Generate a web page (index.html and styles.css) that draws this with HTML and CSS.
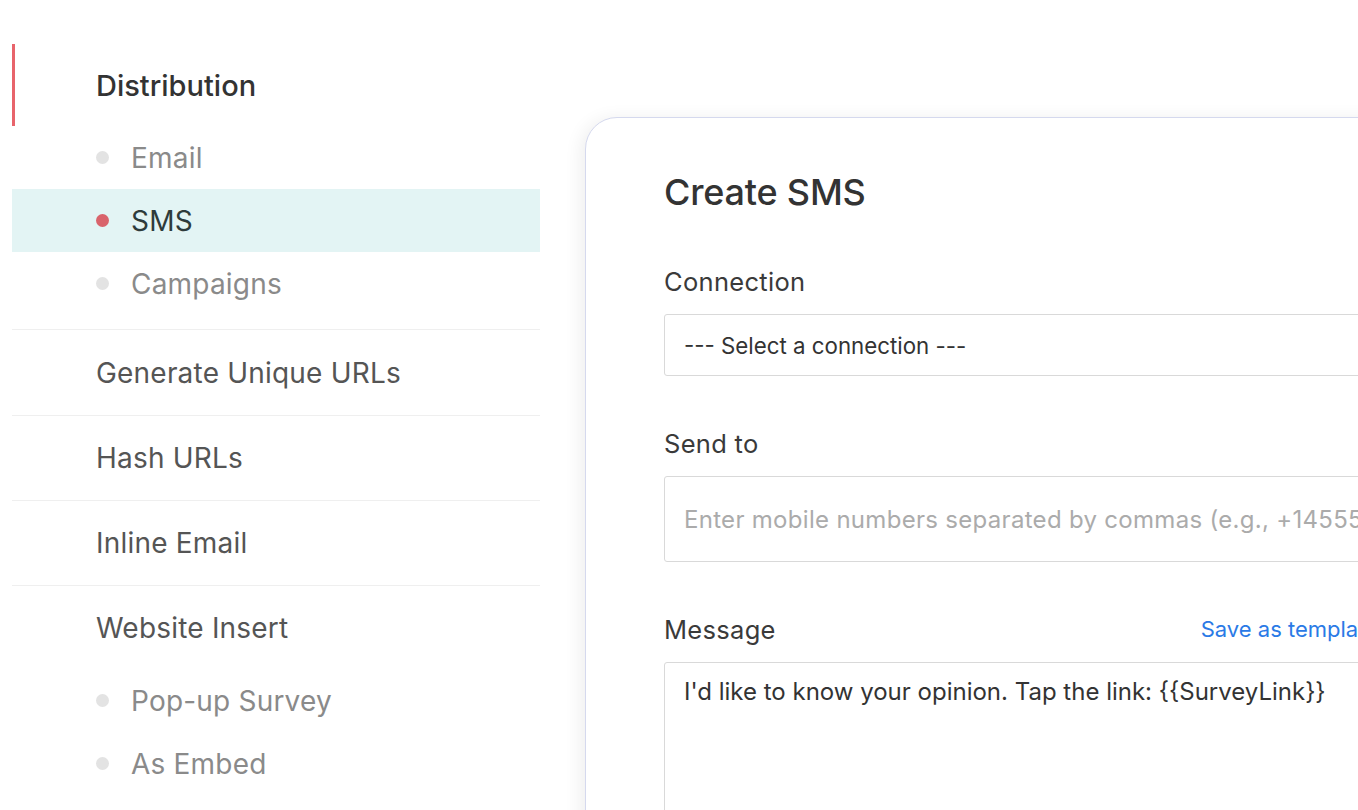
FILE: index.html
```html
<!DOCTYPE html>
<html lang="en">
<head>
<meta charset="utf-8">
<title>Create SMS</title>
<link rel="stylesheet" href="styles.css">
</head>
<body>
<div class="page">
  <nav class="sidebar">
    <div class="section-head active">Distribution</div>
    <ul class="sub">
      <li class="sub-item"><span class="dot"></span>Email</li>
      <li class="sub-item selected"><span class="dot"></span>SMS</li>
      <li class="sub-item"><span class="dot"></span>Campaigns</li>
    </ul>
    <div class="nav-item bordered first">Generate Unique URLs</div>
    <div class="nav-item bordered">Hash URLs</div>
    <div class="nav-item bordered">Inline Email</div>
    <div class="nav-item bordered short">Website Insert</div>
    <ul class="sub">
      <li class="sub-item"><span class="dot"></span>Pop-up Survey</li>
      <li class="sub-item"><span class="dot"></span>As Embed</li>
    </ul>
  </nav>
  <main class="card">
    <h1 class="title">Create SMS</h1>
    <div class="field">
      <div class="label-row"><span class="label">Connection</span></div>
      <div class="select">--- Select a connection ---</div>
    </div>
    <div class="field">
      <div class="label-row"><span class="label">Send to</span></div>
      <div class="input placeholder">Enter mobile numbers separated by commas (e.g., +14555550123, +14555550124)</div>
    </div>
    <div class="field">
      <div class="label-row"><span class="label">Message</span><a class="link">Save as template</a></div>
      <div class="textarea">I'd like to know your opinion. Tap the link: {{SurveyLink}}</div>
    </div>
  </main>
</div>
</body>
</html>
```
FILE: styles.css
```css
html, body {
  margin: 0;
  padding: 0;
  background: #ffffff;
  overflow: hidden;
}
body {
  font-family: "Inter", "Noto Sans", "Liberation Sans", sans-serif;
  color: #333;
  width: 1358px;
  height: 810px;
}
.page {
  display: flex;
  align-items: flex-start;
  padding-left: 12px;
}
.sidebar {
  width: 528px;
  flex: 0 0 528px;
  padding-top: 44px;
}
.section-head {
  height: 82px;
  display: flex;
  align-items: center;
  padding-left: 81px;
  font-size: 29px;
  font-weight: 500;
  color: #333;
  border-left: 3px solid #e8646b;
  box-sizing: border-box;
}
.sub {
  list-style: none;
  margin: 0;
  padding: 0 0 14px 0;
}
.sub-item {
  height: 63px;
  display: flex;
  align-items: center;
  padding-left: 84px;
  font-size: 28px;
  letter-spacing: 0.2px;
  color: #8a8a8a;
}
.sub-item .dot {
  width: 13px;
  height: 13px;
  border-radius: 50%;
  background: #e3e3e3;
  margin-right: 22px;
  flex: 0 0 13px;
}
.sub-item.selected {
  background: #e3f4f4;
  color: #2e3b3b;
}
.sub-item.selected .dot {
  background: #d9636b;
}
.nav-item {
  height: 85px;
  box-sizing: border-box;
  display: flex;
  align-items: center;
  padding-left: 84px;
  font-size: 28px;
  letter-spacing: 0.2px;
  color: #555;
}
.nav-item.first {
  height: 86px;
}
.nav-item.short {
  height: 84px;
}
.nav-item.bordered {
  border-top: 1px solid #efefef;
}
.card {
  margin-left: 45px;
  margin-top: 117px;
  width: 872px;
  flex: 0 0 872px;
  height: 760px;
  box-sizing: border-box;
  border: 1.5px solid #d5d9ee;
  border-radius: 32px;
  box-shadow: -4px 2px 18px rgba(0, 0, 0, 0.07);
  padding: 53px 78px 0 78px;
  background: #fff;
}
.title {
  margin: 0;
  font-size: 36px;
  line-height: 42px;
  font-weight: 500;
  color: #333;
  letter-spacing: -0.2px;
}
.field {
  margin-top: 52px;
}
.field:first-of-type {
  margin-top: 53px;
}
.label-row {
  display: flex;
  justify-content: space-between;
  align-items: center;
  height: 30px;
  margin-bottom: 18px;
}
.label {
  font-size: 25.5px;
  letter-spacing: 0.3px;
  color: #3a3a3a;
}
.link {
  font-size: 22px;
  color: #2a7ae6;
  cursor: pointer;
}
.select, .input, .textarea {
  border: 1.5px solid #d9d9d9;
  border-radius: 3px;
  box-sizing: border-box;
  padding-left: 19px;
  font-size: 24px;
  color: #333;
  white-space: nowrap;
  overflow: hidden;
}
.select {
  height: 62px;
  display: flex;
  align-items: center;
  font-size: 22.3px;
}
.input {
  height: 86px;
  display: flex;
  align-items: center;
}
.placeholder {
  color: #ababab;
  letter-spacing: 0.3px;
}
.textarea {
  height: 200px;
  padding-top: 13px;
  line-height: 32px;
}
```
